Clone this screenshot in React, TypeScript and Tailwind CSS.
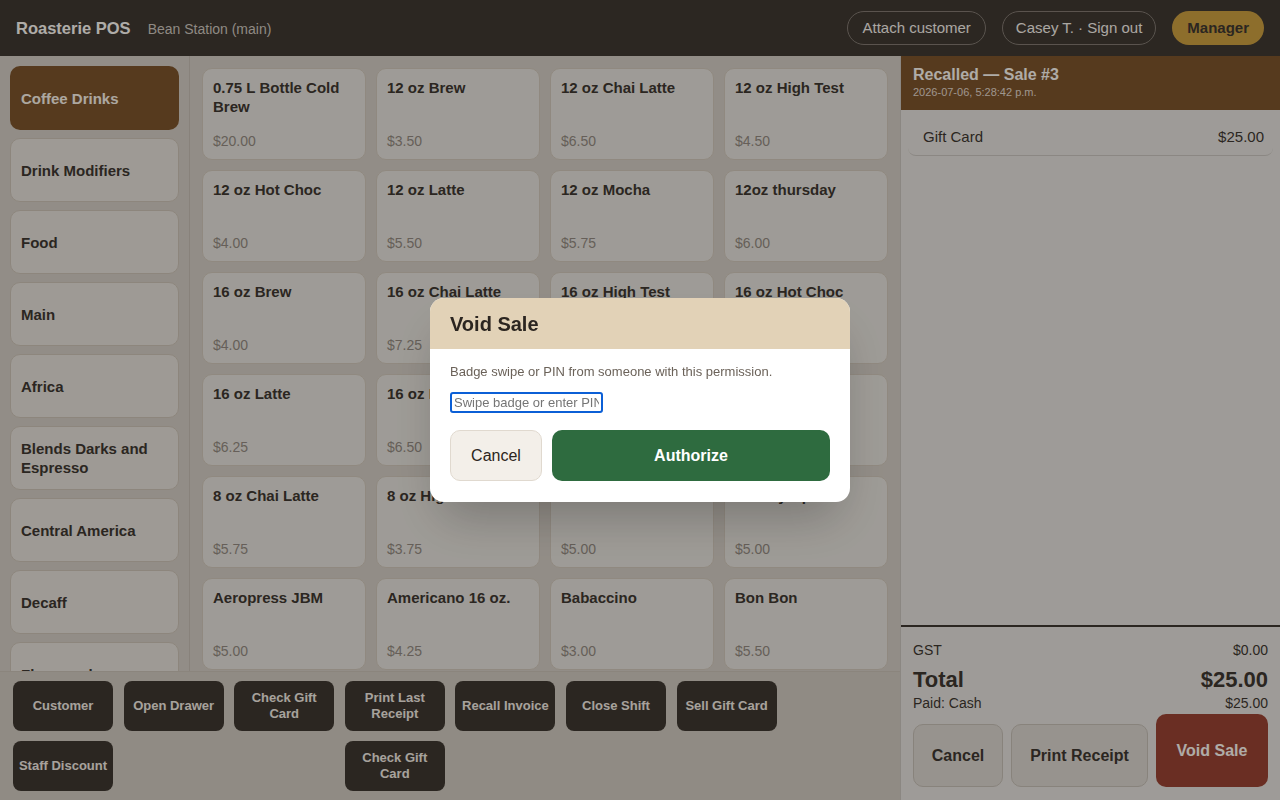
import { useState } from 'react';

interface Item {
  name: string;
  price: string;
}

const categories = [
  'Coffee Drinks',
  'Drink Modifiers',
  'Food',
  'Main',
  'Africa',
  'Blends Darks and Espresso',
  'Central America',
  'Decaff',
  'Flavoured',
  'Merch',
];

const items: Item[] = [
  { name: '0.75 L Bottle Cold Brew', price: '$20.00' },
  { name: '12 oz Brew', price: '$3.50' },
  { name: '12 oz Chai Latte', price: '$6.50' },
  { name: '12 oz High Test', price: '$4.50' },
  { name: '12 oz Hot Choc', price: '$4.00' },
  { name: '12 oz Latte', price: '$5.50' },
  { name: '12 oz Mocha', price: '$5.75' },
  { name: '12oz thursday', price: '$6.00' },
  { name: '16 oz Brew', price: '$4.00' },
  { name: '16 oz Chai Latte', price: '$7.25' },
  { name: '16 oz High Test', price: '$5.00' },
  { name: '16 oz Hot Choc', price: '$4.75' },
  { name: '16 oz Latte', price: '$6.25' },
  { name: '16 oz Mocha', price: '$6.50' },
  { name: '16oz thursday', price: '$7.00' },
  { name: '8 oz Brew', price: '$3.00' },
  { name: '8 oz Chai Latte', price: '$5.75' },
  { name: '8 oz High Test', price: '$3.75' },
  { name: '8 oz Latte', price: '$5.00' },
  { name: '8 oz Syrup', price: '$5.00' },
  { name: 'Aeropress JBM', price: '$5.00' },
  { name: 'Americano 16 oz.', price: '$4.25' },
  { name: 'Babaccino', price: '$3.00' },
  { name: 'Bon Bon', price: '$5.50' },
  { name: 'Cappuccino', price: '$4.50' },
  { name: 'Cortado', price: '$4.25' },
  { name: 'Espresso', price: '$3.00' },
  { name: 'Flat White', price: '$4.75' },
];

const actions = [
  { label: 'Customer', pos: '' },
  { label: 'Open Drawer', pos: '' },
  { label: 'Check Gift Card', pos: '' },
  { label: 'Print Last Receipt', pos: '' },
  { label: 'Recall Invoice', pos: '' },
  { label: 'Close Shift', pos: '' },
  { label: 'Sell Gift Card', pos: '' },
  { label: 'Staff Discount', pos: 'col-start-1' },
  { label: 'Check Gift Card', pos: 'col-start-4' },
];

export default function App() {
  const [category, setCategory] = useState('Coffee Drinks');
  const [pin, setPin] = useState('');

  return (
    <div className="h-screen w-full flex flex-col overflow-hidden font-['Liberation_Sans',Arial,sans-serif] text-[#3e3730]">
      {/* Header */}
      <header className="h-[56px] flex-shrink-0 flex items-center justify-between px-4 bg-[#3f3831]">
        <div className="flex items-baseline gap-[17px]">
          <h1 className="text-[16.5px] font-bold text-[#fbf7f1]">Roasterie POS</h1>
          <span className="text-[14px] text-[#cdc5bd]">Bean Station (main)</span>
        </div>
        <div className="flex items-center gap-4">
          <button className="h-[34px] px-[14px] rounded-full border border-[#817870] text-[15px] text-[#f5efe8]">
            Attach customer
          </button>
          <button className="h-[34px] px-[13px] rounded-full border border-[#817870] text-[15px] text-[#f5efe8]">
            Casey T. · Sign out
          </button>
          <button className="h-[34px] px-[15px] rounded-full bg-[#cb9e40] text-[15px] font-bold text-[#3e3730]">
            Manager
          </button>
        </div>
      </header>

      <div className="flex-1 flex min-h-0">
        {/* Left: catalog + actions */}
        <div className="flex-1 flex flex-col min-w-0">
          <div className="flex-1 flex min-h-0 bg-[#d2cbc2]">
            {/* Categories */}
            <nav className="w-[190px] flex-shrink-0 border-r border-[#c3bbb0] p-[10px] flex flex-col gap-2 overflow-hidden">
              {categories.map(c => (
                <button
                  key={c}
                  onClick={() => setCategory(c)}
                  className={
                    c === category
                      ? 'h-[64px] flex-shrink-0 rounded-[10px] px-[11px] text-left text-[15px] leading-[19px] font-bold bg-[#7c542c] text-[#f7f0e6]'
                      : 'h-[64px] flex-shrink-0 rounded-[10px] px-[10px] text-left text-[15px] leading-[19px] font-bold bg-[#e2ddd6] border border-[#cbc1b4] text-[#3e3730]'
                  }
                >
                  {c}
                </button>
              ))}
            </nav>

            {/* Items */}
            <div className="flex-1 p-3 overflow-hidden">
              <div className="grid grid-cols-[repeat(4,164px)] auto-rows-[92px] gap-[10px]">
                {items.map(it => (
                  <button
                    key={it.name}
                    className="flex flex-col justify-between text-left rounded-[10px] bg-[#e3dfd8] border border-[#cfc5b8] px-[10px] pt-[9px] pb-[7px]"
                  >
                    <span className="text-[15px] leading-[19px] font-bold text-[#3e3730]">{it.name}</span>
                    <span className="text-[14px] text-[#928980]">{it.price}</span>
                  </button>
                ))}
              </div>
            </div>
          </div>

          {/* Action bar */}
          <div className="h-[129px] flex-shrink-0 border-t border-[#c7bfb4] bg-[#cfc8be] pt-[9px] pl-[13px]">
            <div className="grid grid-cols-[repeat(7,100px)] auto-rows-[50px] gap-x-[10.6px] gap-y-[10px]">
              {actions.map((a, i) => (
                <button
                  key={i}
                  className={`${a.pos} rounded-lg bg-[#3e3730] text-[13px] leading-[16px] font-bold text-[#f0e9e0] px-[5px]`}
                >
                  {a.label}
                </button>
              ))}
            </div>
          </div>
        </div>

        {/* Right: current sale */}
        <aside className="w-[380px] flex-shrink-0 flex flex-col border-l border-[#c8c2ba] bg-[#e3dfda]">
          <div className="h-[54px] flex-shrink-0 bg-[#7b532b] px-[12px] pt-[9px]">
            <p className="text-[16px] leading-[20px] font-bold text-[#fbf6ef]">Recalled — Sale #3</p>
            <p className="text-[11px] leading-[15px] text-[#e2d7cc]">2026-07-06, 5:28:42 p.m.</p>
          </div>

          <div className="flex-1 px-[7px] pt-[9px]">
            <div className="flex items-center justify-between h-[37px] pl-[15px] pr-[9px] rounded-lg border-b border-[#c7c2bc] text-[15px] text-[#3e3730]">
              <span>Gift Card</span>
              <span>$25.00</span>
            </div>
          </div>

          <div className="flex-shrink-0 border-t-2 border-[#3e3730] px-[12px] pt-[13px] pb-[13px]">
            <div className="flex justify-between h-[20px] items-center text-[14px]">
              <span>GST</span>
              <span>$0.00</span>
            </div>
            <div className="flex justify-between h-[28px] mt-[5px] items-center text-[22px] font-bold">
              <span>Total</span>
              <span>$25.00</span>
            </div>
            <div className="flex justify-between h-[20px] items-center text-[14px]">
              <span>Paid: Cash</span>
              <span>$25.00</span>
            </div>
            <div className="mt-[1px] flex items-end gap-2">
              <button className="w-[90px] h-[63px] rounded-[10px] bg-[#d9d3cc] border border-[#c3bcb2] text-[16px] font-bold text-[#3e3730]">
                Cancel
              </button>
              <button className="w-[137px] h-[63px] rounded-[10px] bg-[#d9d3cc] border border-[#c3bcb2] text-[16px] font-bold text-[#3e3730]">
                Print Receipt
              </button>
              <button className="flex-1 h-[73px] rounded-[10px] bg-[#994333] text-[16px] font-bold text-[#fbf6ef]">
                Void Sale
              </button>
            </div>
          </div>
        </aside>
      </div>

      {/* Authorization modal */}
      <div className="fixed inset-0 bg-black/30 flex items-center justify-center">
        <div className="w-[420px] rounded-[14px] bg-white overflow-hidden shadow-2xl">
          <div className="h-[51px] bg-[#e2d2b7] px-5 flex items-center">
            <h2 className="text-[20px] font-bold text-[#2b2520]">Void Sale</h2>
          </div>
          <div className="px-5 pt-[14px] pb-[21px]">
            <p className="text-[13px] leading-[18px] text-[#6b6259]">
              Badge swipe or PIN from someone with this permission.
            </p>
            <input
              value={pin}
              onChange={e => setPin(e.target.value)}
              placeholder="Swipe badge or enter PIN"
              className="mt-[11px] block w-[153px] h-[21px] px-[2px] text-[13px] rounded-[3px] border-2 border-[#0b5fd6] outline-none placeholder:text-[#757575]"
            />
            <div className="mt-[17px] flex gap-[10px]">
              <button className="w-[92px] h-[51px] rounded-[10px] bg-[#f3efe9] border border-[#e0d9cf] text-[16px] text-[#2b2520]">
                Cancel
              </button>
              <button className="flex-1 h-[51px] rounded-[10px] bg-[#2e6b3f] text-[16px] font-bold text-white">
                Authorize
              </button>
            </div>
          </div>
        </div>
      </div>
    </div>
  );
}
